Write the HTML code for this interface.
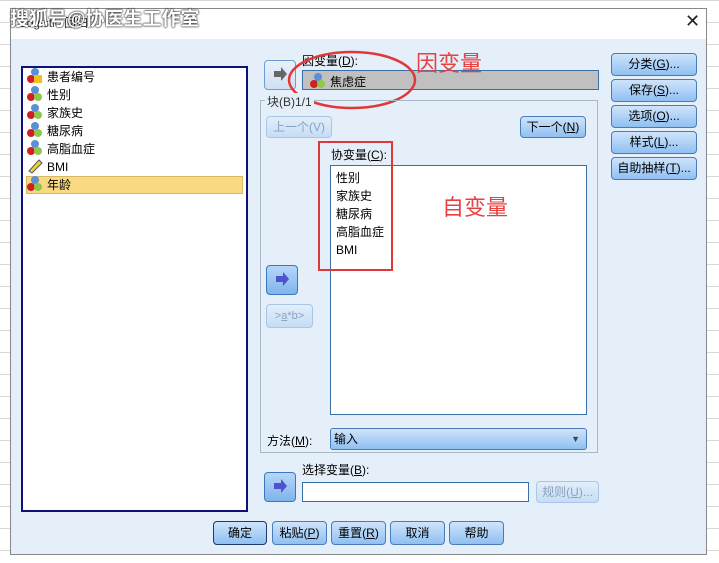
<!DOCTYPE html>
<html><head><meta charset="utf-8"><style>
*{box-sizing:border-box;margin:0;padding:0}
body{width:719px;height:563px;position:relative;overflow:hidden;background:#fff;font-family:"Liberation Sans","Noto Sans CJK SC",sans-serif;font-size:12px;color:#000;white-space:nowrap}
.a{position:absolute}
.grid{background-image:linear-gradient(#d8d8d8 1px,transparent 1px);background-size:100% 22px}
.btn{position:absolute;border:1px solid #4a7db8;border-radius:4px;background:linear-gradient(#cfe4fb,#8fc0f2);text-align:center;line-height:20px;font-size:12px;color:#000}
.dis{border-color:#a9c6e6;background:linear-gradient(#e2eefb,#c7ddf5);color:#8aa3be}
.list{position:absolute;background:#fff}
.it{position:absolute;left:4px;width:200px;height:18px;line-height:18px;font-size:12px}
.ic{display:inline-block;width:16px;height:16px;position:relative;vertical-align:-3px;margin-right:4px}
.ic i{position:absolute;width:8px;height:8px;border-radius:50%}
.arr{position:absolute;border:1px solid #6f9ccc;border-radius:4px}
</style></head><body>
<div class="a grid" style="left:0;top:0;width:719px;height:563px"></div>
<div class="a" style="left:10px;top:8px;width:697px;height:547px;border:1px solid #888;background:#e5effa"></div>
<div class="a" style="left:11px;top:9px;width:695px;height:30px;background:#fff"></div>
<div class="a" style="left:20px;top:14px;font-size:12px;color:#333">Logistic 回归</div>
<div class="a" style="left:10px;top:4px;font-size:19px;color:#fff;font-weight:bold;text-shadow:0 0 2px #000,0 0 1px #000">搜狐号@协医生工作室</div>
<div class="a" style="left:685px;top:11px;font-size:18px;color:#222">✕</div>

<div class="list" style="left:21px;top:66px;width:227px;height:446px;border:2px solid #10107a"></div>
<div class="a" style="left:26px;top:176px;width:217px;height:18px;background:#f9da82;border:1px solid #d8b860"></div>
<div class="a" style="left:23px;top:68px;width:220px;height:140px">
<div class="it" style="top:0"><span class="ic"><i style="left:4px;top:0;background:#5b8fd6"></i><i style="left:0;top:7px;background:#d02020"></i><i style="left:7px;top:7px;background:#f0c020;border-radius:0"></i></span>患者编号</div>
<div class="it" style="top:18px"><span class="ic"><i style="left:4px;top:0;background:#5b8fd6"></i><i style="left:0;top:7px;background:#d02020"></i><i style="left:7px;top:7px;background:#8cc84a"></i></span>性别</div>
<div class="it" style="top:36px"><span class="ic"><i style="left:4px;top:0;background:#5b8fd6"></i><i style="left:0;top:7px;background:#d02020"></i><i style="left:7px;top:7px;background:#8cc84a"></i></span>家族史</div>
<div class="it" style="top:54px"><span class="ic"><i style="left:4px;top:0;background:#5b8fd6"></i><i style="left:0;top:7px;background:#d02020"></i><i style="left:7px;top:7px;background:#8cc84a"></i></span>糖尿病</div>
<div class="it" style="top:72px"><span class="ic"><i style="left:4px;top:0;background:#5b8fd6"></i><i style="left:0;top:7px;background:#d02020"></i><i style="left:7px;top:7px;background:#8cc84a"></i></span>高脂血症</div>
<div class="it" style="top:90px"><span class="ic"><svg width="16" height="16"><path d="M2 13 L12 2 L15 5 L5 15Z" fill="#f0d040" stroke="#555"/></svg></span>BMI</div>
<div class="it" style="top:108px"><span class="ic"><i style="left:4px;top:0;background:#5b8fd6"></i><i style="left:0;top:7px;background:#d02020"></i><i style="left:7px;top:7px;background:#8cc84a"></i></span>年龄</div>
</div>

<div class="arr" style="left:264px;top:60px;width:32px;height:30px;background:linear-gradient(#e8f1fb,#cfe0f2)"><svg width="30" height="28"><path d="M9 10 L16 10 L16 6 L22 13 L16 20 L16 16 L9 16Z" fill="#666"/></svg></div>
<div class="a" style="left:302px;top:52px">因变量(<u>D</u>):</div>
<div class="a" style="left:302px;top:70px;width:297px;height:20px;border:1px solid #3a6fa8;background:#c0c0c0"></div>
<div class="a" style="left:310px;top:73px"><span class="ic"><i style="left:4px;top:0;background:#5b8fd6"></i><i style="left:0;top:7px;background:#d02020"></i><i style="left:7px;top:7px;background:#8cc84a"></i></span>焦虑症</div>
<svg class="a" style="left:285px;top:48px" width="135" height="64"><ellipse cx="67" cy="32" rx="63" ry="28" fill="none" stroke="#e03838" stroke-width="2.5"/></svg>
<div class="a" style="left:416px;top:46px;font-size:22px;color:#e84040">因变量</div>

<div class="a" style="left:260px;top:100px;width:338px;height:353px;border:1px solid #a8b8c8"></div>
<div class="a" style="left:265px;top:93px;background:#e5effa;padding:0 2px;color:#333">块(B)1/1</div>
<div class="btn dis" style="left:266px;top:116px;width:66px;height:22px">上一个(V)</div>
<div class="btn" style="left:520px;top:116px;width:66px;height:22px">下一个(<u>N</u>)</div>
<div class="a" style="left:331px;top:146px">协变量(<u>C</u>):</div>
<div class="list" style="left:330px;top:165px;width:257px;height:250px;border:1px solid #3a6fa8"></div>
<div class="a" style="left:336px;top:169px;line-height:18px">性别<br>家族史<br>糖尿病<br>高脂血症<br>BMI</div>
<div class="a" style="left:318px;top:141px;width:75px;height:130px;border:2.5px solid #e03838"></div>
<div class="a" style="left:442px;top:190px;font-size:22px;color:#e84040">自变量</div>

<div class="arr" style="left:266px;top:265px;width:32px;height:30px;background:linear-gradient(#b6d6f8,#7fb4ec);border-color:#3a78c0"><svg width="30" height="28"><path d="M9 10 L16 10 L16 6 L22 13 L16 20 L16 16 L9 16Z" fill="#5050d0"/></svg></div>
<div class="btn dis" style="left:266px;top:304px;width:47px;height:24px;line-height:22px;font-size:11px">&gt;<u>a</u>*b&gt;</div>

<div class="a" style="left:267px;top:432px">方法(<u>M</u>):</div>
<div class="btn" style="left:330px;top:428px;width:257px;height:22px;text-align:left;padding-left:3px;border-radius:3px">输入<span style="position:absolute;right:6px;top:0;font-size:9px;color:#444">▼</span></div>

<div class="arr" style="left:264px;top:472px;width:32px;height:30px;background:linear-gradient(#b6d6f8,#7fb4ec);border-color:#3a78c0"><svg width="30" height="28"><path d="M9 10 L16 10 L16 6 L22 13 L16 20 L16 16 L9 16Z" fill="#5050d0"/></svg></div>
<div class="a" style="left:302px;top:461px">选择变量(<u>B</u>):</div>
<div class="a" style="left:302px;top:482px;width:227px;height:20px;border:1px solid #3a6fa8;background:#fff"></div>
<div class="btn dis" style="left:536px;top:481px;width:63px;height:22px">规则(<u>U</u>)...</div>

<div class="btn" style="left:213px;top:521px;width:54px;height:24px;line-height:22px;border-color:#1a3a70">确定</div>
<div class="btn" style="left:272px;top:521px;width:55px;height:24px;line-height:22px">粘贴(<u>P</u>)</div>
<div class="btn" style="left:331px;top:521px;width:55px;height:24px;line-height:22px">重置(<u>R</u>)</div>
<div class="btn" style="left:390px;top:521px;width:55px;height:24px;line-height:22px">取消</div>
<div class="btn" style="left:449px;top:521px;width:55px;height:24px;line-height:22px">帮助</div>

<div class="btn" style="left:611px;top:53px;width:86px;height:23px">分类(<u>G</u>)...</div>
<div class="btn" style="left:611px;top:79px;width:86px;height:23px">保存(<u>S</u>)...</div>
<div class="btn" style="left:611px;top:105px;width:86px;height:23px">选项(<u>O</u>)...</div>
<div class="btn" style="left:611px;top:131px;width:86px;height:23px">样式(<u>L</u>)...</div>
<div class="btn" style="left:611px;top:157px;width:86px;height:23px">自助抽样(<u>T</u>)...</div>
</body></html>
